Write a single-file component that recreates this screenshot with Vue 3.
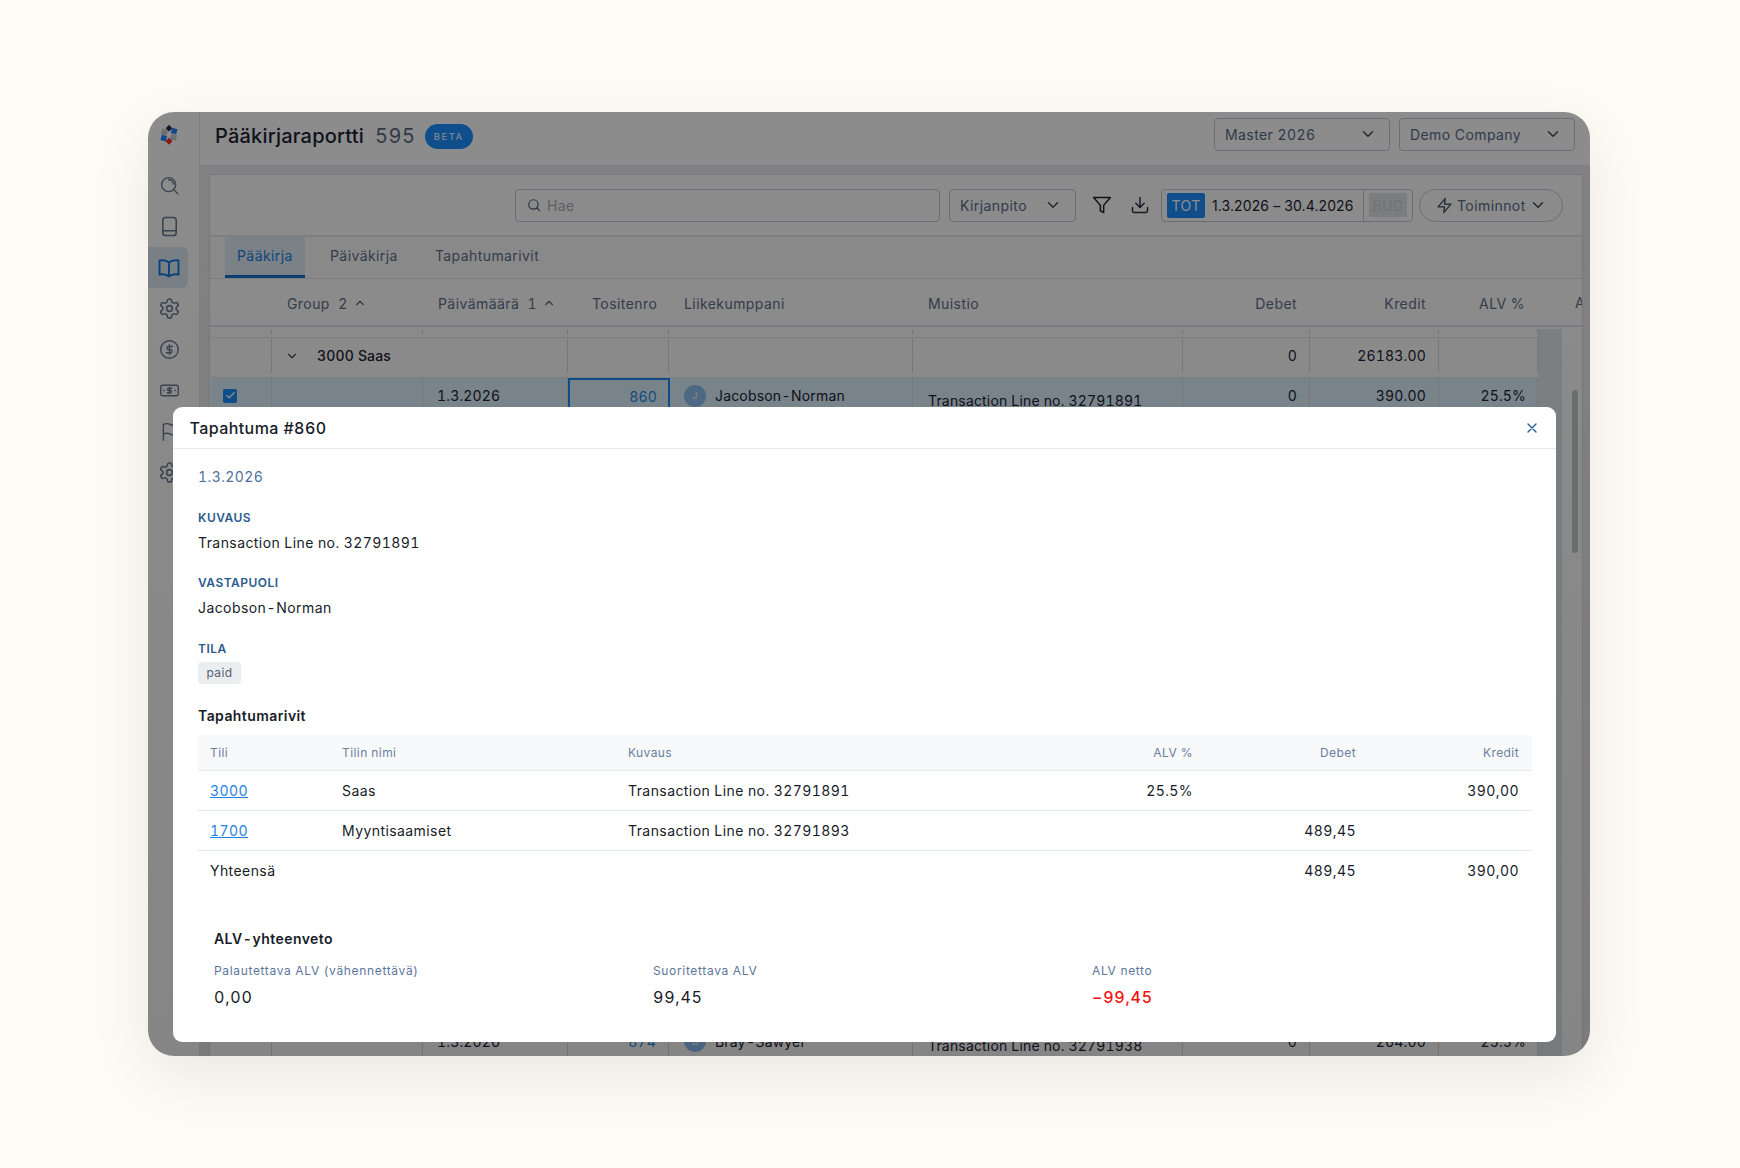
<script setup>
const icons = {
  search: 'M19 11a8 8 0 1 1-16 0a8 8 0 1 1 16 0M21.5 21.5l-4.8-4.8M11 5.5a5.5 5.5 0 0 1 5.5 5',
  book: 'M8 2.5h8a3 3 0 0 1 3 3v13a3 3 0 0 1-3 3H8a3 3 0 0 1-3-3v-13a3 3 0 0 1 3-3zM5 16.5h14',
  open: 'M12 6.5C10 4.5 6 4 2.5 4.5v14c3.5-.5 7.5 0 9.5 2 2-2 6-2.5 9.5-2v-14C18 4 14 4.5 12 6.5zM12 6.5v14',
  cog: 'M12.22 2h-.44a2 2 0 0 0-2 2v.18a2 2 0 0 1-1 1.73l-.43.25a2 2 0 0 1-2 0l-.15-.08a2 2 0 0 0-2.73.73l-.22.38a2 2 0 0 0 .73 2.73l.15.1a2 2 0 0 1 1 1.72v.51a2 2 0 0 1-1 1.74l-.15.09a2 2 0 0 0-.73 2.73l.22.38a2 2 0 0 0 2.73.73l.15-.08a2 2 0 0 1 2 0l.43.25a2 2 0 0 1 1 1.73V20a2 2 0 0 0 2 2h.44a2 2 0 0 0 2-2v-.18a2 2 0 0 1 1-1.73l.43-.25a2 2 0 0 1 2 0l.15.08a2 2 0 0 0 2.73-.73l.22-.39a2 2 0 0 0-.73-2.73l-.15-.08a2 2 0 0 1-1-1.74v-.5a2 2 0 0 1 1-1.74l.15-.09a2 2 0 0 0 .73-2.73l-.22-.38a2 2 0 0 0-2.73-.73l-.15.08a2 2 0 0 1-2 0l-.43-.25a2 2 0 0 1-1-1.73V4a2 2 0 0 0-2-2zM15 12a3 3 0 1 1-6 0a3 3 0 1 1 6 0',
  dollar: 'M22 12a10 10 0 1 1-20 0a10 10 0 1 1 20 0M15.5 8.5h-5a1.9 1.9 0 0 0 0 3.6h3a1.9 1.9 0 0 1 0 3.6h-5M12 6.5v11',
  money: 'M4 6h16a2 2 0 0 1 2 2v8a2 2 0 0 1-2 2H4a2 2 0 0 1-2-2V8a2 2 0 0 1 2-2zM14.5 9.5H11a1.2 1.2 0 0 0 0 2.5h2a1.2 1.2 0 0 1 0 2.5H9.5M12 8.5v7M5.5 12h.5M18 12h.5',
  flag: 'M5 22V4c3-1.5 6-1 8 0s5 1.5 7 0v11c-2 1.5-5 1-7 0s-5-1.5-8 0',
  filter: 'M22 3H2l8 9.46V19l4 2v-8.54L22 3z',
  download: 'M21 15v4a2 2 0 0 1-2 2H5a2 2 0 0 1-2-2v-4M7 10l5 5 5-5M12 15V3',
  zap: 'M13 2 3 14h9l-1 8 10-12h-9l1-8z',
  chevron: 'm6 9 6 6 6-6',
  up: 'm6 15 6-6 6 6',
  close: 'M18 6 6 18M6 6l12 12',
  check: 'M20 6 9 17l-5-5'
}
const sideItems = [
  { icon: 'search' }, { icon: 'book' }, { icon: 'open', active: true },
  { icon: 'cog' }, { icon: 'dollar' }, { icon: 'money' }, { icon: 'flag' }, { icon: 'cog' }
]
const tabs = ['Pääkirja', 'Päiväkirja', 'Tapahtumarivit']
const hiddenRows = Array.from({ length: 15 }, (_, i) => i)
const lines = [
  { tili: '3000', nimi: 'Saas', kuvaus: 'Transaction Line no. 32791891', alv: '25.5%', debet: '', kredit: '390,00' },
  { tili: '1700', nimi: 'Myyntisaamiset', kuvaus: 'Transaction Line no. 32791893', alv: '', debet: '489,45', kredit: '' }
]
const summary = [
  { label: 'Palautettava ALV (vähennettävä)', value: '0,00' },
  { label: 'Suoritettava ALV', value: '99,45' },
  { label: 'ALV netto', value: '−99,45', neg: true }
]
</script>

<template>
  <div class="page">
    <div class="window">
      <aside class="side">
        <svg class="logo" viewBox="0 0 24 24">
          <rect x="3" y="5" width="7" height="7" fill="#c9cbd0" transform="rotate(15 6.5 8.5)" />
          <rect x="14" y="11" width="7" height="7" fill="#c9cbd0" transform="rotate(15 17.5 14.5)" />
          <rect x="9.2" y="1" width="5.6" height="5.6" fill="#1b2a44" transform="rotate(45 12 3.8)" />
          <rect x="15" y="4" width="6.5" height="6.5" fill="#2080ff" transform="rotate(15 18.2 7.2)" />
          <rect x="2.5" y="12.5" width="6.5" height="6.5" fill="#2080ff" transform="rotate(15 5.7 15.7)" />
          <rect x="9" y="16.5" width="6" height="6" fill="#ff2a2a" transform="rotate(45 12 19.5)" />
        </svg>
        <div v-for="(item, i) in sideItems" :key="i" class="side-item" :class="{ active: item.active }">
          <svg class="ico side-ico" :class="'i-' + item.icon" viewBox="0 0 24 24"><path :d="icons[item.icon]" /></svg>
        </div>
      </aside>

      <div class="main">
        <header class="top">
          <h1 class="title">Pääkirjaraportti</h1>
          <span class="count">595</span>
          <span class="beta">BETA</span>
          <div class="select top-select first">
            <span>Master 2026</span>
            <svg class="ico chev" viewBox="0 0 24 24"><path :d="icons.chevron" /></svg>
          </div>
          <div class="select top-select">
            <span>Demo Company</span>
            <svg class="ico chev" viewBox="0 0 24 24"><path :d="icons.chevron" /></svg>
          </div>
        </header>

        <div class="band">
          <section class="card">
            <div class="toolbar">
              <div class="searchbox">
                <svg class="ico s14" viewBox="0 0 24 24"><path :d="icons.search.split('M11 5.5')[0]" /></svg>
                <span class="ph">Hae</span>
              </div>
              <div class="select kirj">
                <span>Kirjanpito</span>
                <svg class="ico chev" viewBox="0 0 24 24"><path :d="icons.chevron" /></svg>
              </div>
              <svg class="ico tool-ico first-tool" viewBox="0 0 24 24"><path :d="icons.filter" /></svg>
              <svg class="ico tool-ico second-tool" viewBox="0 0 24 24"><path :d="icons.download" /></svg>
              <div class="dates">
                <span class="tot">TOT</span>
                <span class="range">1.3.2026 – 30.4.2026</span>
                <span class="bud-wrap"><span class="bud">BUD</span></span>
              </div>
              <div class="pill">
                <svg class="ico zap" viewBox="0 0 24 24"><path :d="icons.zap" /></svg>
                <span>Toiminnot</span>
                <svg class="ico chev" viewBox="0 0 24 24"><path :d="icons.chevron" /></svg>
              </div>
            </div>

            <nav class="tabs">
              <div v-for="(t, i) in tabs" :key="t" class="tab" :class="{ on: i === 0 }">{{ t }}</div>
            </nav>

            <div class="thead">
              <div class="cols">
                <div></div>
                <div class="th">Group&nbsp; 2 <svg class="ico up" viewBox="0 0 24 24"><path :d="icons.up" /></svg></div>
                <div class="th">Päivämäärä&nbsp; 1 <svg class="ico up" viewBox="0 0 24 24"><path :d="icons.up" /></svg></div>
                <div class="th tosite">Tositenro</div>
                <div class="th">Liikekumppani</div>
                <div class="th">Muistio</div>
                <div class="th r">Debet</div>
                <div class="th r">Kredit</div>
                <div class="th r">ALV %</div>
              </div>
              <span class="th clipped">A</span>
            </div>

            <div class="scroller">
              <div class="rows">
                <div class="cols tick">
                  <div v-for="n in 9" :key="n" class="c"></div>
                </div>
                <div class="cols row group">
                  <div class="c"></div>
                  <div class="c span2">
                    <svg class="ico gchev" viewBox="0 0 24 24"><path :d="icons.chevron" /></svg>
                    <b>3000 Saas</b>
                  </div>
                  <div class="c"></div>
                  <div class="c"></div>
                  <div class="c"></div>
                  <div class="c r">0</div>
                  <div class="c r">26183.00</div>
                  <div class="c"></div>
                </div>
                <div class="cols row sel">
                  <div class="c"><span class="cb"><svg class="ico cbi" viewBox="0 0 24 24"><path :d="icons.check" /></svg></span></div>
                  <div class="c"></div>
                  <div class="c date">1.3.2026</div>
                  <div class="c r blue focus">860</div>
                  <div class="c party"><span class="av">J</span>Jacobson<span class="hy">-</span>Norman</div>
                  <div class="c memo">Transaction Line no. 32791891</div>
                  <div class="c r">0</div>
                  <div class="c r">390.00</div>
                  <div class="c r pct">25.5%</div>
                </div>
                <div v-for="n in hiddenRows" :key="n" class="cols row">
                  <div v-for="m in 9" :key="m" class="c"></div>
                </div>
                <div class="cols row">
                  <div class="c"></div>
                  <div class="c"></div>
                  <div class="c date">1.3.2026</div>
                  <div class="c r blue">874</div>
                  <div class="c party"><span class="av">B</span>Bray<span class="hy">-</span>Sawyer</div>
                  <div class="c memo">Transaction Line no. 32791938</div>
                  <div class="c r">0</div>
                  <div class="c r">264.00</div>
                  <div class="c r pct">25.5%</div>
                </div>
              </div>
              <div class="panel"></div>
              <div class="track"><div class="thumb"></div></div>
            </div>
          </section>
        </div>
      </div>

      <div class="overlay"></div>

      <div class="modal">
        <div class="m-head">
          <span class="m-title">Tapahtuma #860</span>
          <svg class="ico m-close" viewBox="0 0 24 24"><path :d="icons.close" /></svg>
        </div>
        <div class="m-body">
          <div class="m-date">1.3.2026</div>
          <div class="lab">KUVAUS</div>
          <div class="val">Transaction Line no. 32791891</div>
          <div class="lab">VASTAPUOLI</div>
          <div class="val">Jacobson<span class="hy">-</span>Norman</div>
          <div class="lab">TILA</div>
          <div class="tag">paid</div>
          <div class="sub">Tapahtumarivit</div>
          <div class="lines">
            <div class="ln lh">
              <div>Tili</div><div>Tilin nimi</div><div>Kuvaus</div>
              <div class="r">ALV %</div><div class="r">Debet</div><div class="r">Kredit</div>
            </div>
            <div v-for="l in lines" :key="l.tili" class="ln lb">
              <div><a class="link">{{ l.tili }}</a></div><div>{{ l.nimi }}</div><div>{{ l.kuvaus }}</div>
              <div class="r">{{ l.alv }}</div><div class="r">{{ l.debet }}</div><div class="r">{{ l.kredit }}</div>
            </div>
            <div class="ln lb last">
              <div>Yhteensä</div><div></div><div></div><div></div>
              <div class="r">489,45</div><div class="r">390,00</div>
            </div>
          </div>
          <div class="sum">
            <div class="sum-title">ALV<span class="hy">-</span>yhteenveto</div>
            <div class="sum-grid">
              <div v-for="s in summary" :key="s.label">
                <div class="sum-lab">{{ s.label }}</div>
                <div class="sum-val" :class="{ neg: s.neg }">{{ s.value }}</div>
              </div>
            </div>
          </div>
        </div>
      </div>
    </div>
  </div>
</template>

<style>
html, body { margin: 0; background: #fefbf4; }
</style>

<style scoped>
* { box-sizing: border-box; }
.page {
  width: 1740px; height: 1168px; padding: 112px 0 0 148px; background: #fefbf4;
  font-family: Inter, "Noto Sans", sans-serif; color: #1a2233; overflow: hidden;
  letter-spacing: .03em; font-size: 14px; font-variant-numeric: tabular-nums;
}
.hy { margin: 0 .3px; }
.window {
  position: relative; width: 1442px; height: 944px; border-radius: 26px;
  display: flex; background: #fff;
  box-shadow: 0 20px 60px rgba(0, 0, 0, .08);
}
.overlay {
  position: absolute; inset: 0; border-radius: 26px;
  background: linear-gradient(#00000073, #0000007a);
}
.ico { fill: none; stroke: currentColor; stroke-width: 2; stroke-linecap: round; stroke-linejoin: round; flex: none; display: block; }

.side {
  width: 52px; flex: none; border-right: 1px solid #e3e5ea; display: flex; flex-direction: column;
  align-items: flex-start; border-radius: 26px 0 0 26px; overflow: hidden;
}
.logo { width: 20px; height: 20px; margin: 13px 0 0 11px; }
.side-item { width: 40px; height: 41px; display: flex; align-items: center; justify-content: center; padding-left: 2px; color: #6b7a92; border-radius: 0 6px 6px 0; }
.side-item:first-of-type { margin-top: 20px; }
.side-item.active { background: #dcebf4; color: #0f79e0; }
.side-ico { width: 21px; height: 21px; stroke-width: 1.6; }
.i-book, .i-cog { width: 23px; height: 23px; }
.i-open { width: 24px; height: 24px; stroke-width: 1.9; }

.main { flex: 1; min-width: 0; display: flex; flex-direction: column; border-radius: 0 26px 26px 0; overflow: hidden; }
.top { height: 53px; flex: none; display: flex; align-items: center; padding: 0 15px 9px 15px; }
.title { margin: 4px 0 0; font-size: 20px; font-weight: 500; letter-spacing: .01em; color: #1a2233; }
.count { font-size: 20px; font-weight: 400; color: #5a6a80; margin: 4px 0 0 11px; letter-spacing: .03em; }
.beta {
  margin: 4px 0 0 9px; width: 48px; height: 25px; border-radius: 13px; background: #1c8eff; color: #fff;
  font-size: 9.5px; letter-spacing: .16em; display: flex; align-items: center; justify-content: center;
}
.select { display: flex; align-items: center; justify-content: space-between; border: 1px solid #c4c8d2; border-radius: 4px; color: #5a6a88; }
.top-select { width: 176px; height: 33px; padding: 0 12px 0 10px; margin-left: 9px; }
.top-select.first { margin-left: auto; }
.chev { width: 18px; height: 18px; color: #3d4a60; }

.band { flex: 1; min-height: 0; background: #ebecef; padding: 9px 7px 0 9px; }
.card { height: 100%; background: #fff; border: 1px solid #d9dce3; border-bottom: 0; display: flex; flex-direction: column; overflow: hidden; }

.toolbar { height: 62px; flex: none; display: flex; align-items: center; border-bottom: 2px solid #e6e8ec; padding: 0 19px 0 305px; }
.searchbox { width: 425px; height: 33px; border: 1px solid #c4c8d2; border-radius: 4px; display: flex; align-items: center; padding-left: 11px; gap: 6px; color: #4d5a70; }
.s14 { width: 14px; height: 14px; }
.ph { color: #a9aeb8; }
.kirj { width: 127px; height: 33px; margin-left: 9px; padding: 0 13px 0 10px; }
.tool-ico { width: 20px; height: 20px; color: #1a2233; stroke-width: 1.8; }
.first-tool { margin-left: 16px; }
.second-tool { margin-left: 18px; color: #2a3242; }
.dates { margin-left: 11px; width: 252px; height: 33px; border: 1px solid #c4c8d2; border-radius: 4px; display: flex; align-items: center; padding-left: 5px; }
.tot { width: 38px; height: 25px; background: #1c8eff; color: #fff; border-radius: 2px; display: flex; align-items: center; justify-content: center; }
.range { margin-left: 7px; color: #1a2233; white-space: nowrap; letter-spacing: .1px; font-variant-numeric: normal; }
.bud-wrap { margin-left: auto; width: 49px; height: 31px; border-left: 1px solid #c4c8d2; display: flex; align-items: center; justify-content: center; }
.bud { width: 38px; height: 24px; background: #e3e4e6; color: #cfd1d4; display: flex; align-items: center; justify-content: center; border-radius: 2px; }
.pill { margin-left: auto; width: 144px; height: 33px; border: 1px solid #c4c8d2; border-radius: 17px; display: flex; align-items: center; padding-left: 16px; color: #5a6a88; }
.zap { width: 17px; height: 17px; margin-right: 4px; stroke-width: 1.8; color: #3d4a60; }
.pill .chev { margin-left: 3px; }

.tabs { height: 42px; flex: none; display: flex; align-items: stretch; padding-left: 15px; border-bottom: 1px solid #e6e8ec; background: #fbfbfc; }
.tab { padding: 0 12px; display: flex; align-items: center; color: #5f6f88; margin-right: 13px; padding-bottom: 4px; }
.tab.on { background: #dfeef8; color: #1c80e0; border-bottom: 3px solid #1474cf; padding-bottom: 1px; width: 80px; }

.thead { height: 48px; flex: none; display: flex; align-items: center; position: relative; border-bottom: 2px solid #e2e4e9; padding-top: 2px; }
.cols {
  display: grid; width: 1327px; margin-left: 1px;
  grid-template-columns: 61px 151px 145px 101px 244px 270px 127px 129px 99px;
}
.th { display: flex; align-items: center; padding-left: 15px; color: #5f6f88; white-space: nowrap; gap: 2px; }
.th.tosite { padding-left: 24px; }
.th.r { justify-content: flex-end; padding: 0 13px 0 0; }
.clipped { position: absolute; left: 1365px; top: 15px; padding: 0; }
.up { width: 14px; height: 14px; margin-left: 3px; }

.scroller { flex: 1; min-height: 0; display: flex; overflow: hidden; }
.rows { width: 1328px; flex: none; }
.tick { height: 10px; }
.tick .c { border-right: 1px solid #d9dce3; margin: 2px 0 3px; }
.row { height: 40.34px; border-top: 1px solid #e7e9ed; color: #1a2233; letter-spacing: .012em; }
.row .c { display: flex; align-items: center; padding-left: 15px; border-right: 1px solid #d9dce3; margin: 0 0 4px; white-space: nowrap; min-width: 0; }
.row .c:first-child { padding-left: 12px; }
.row .date { padding-left: 14px; }
.row .r { justify-content: flex-end; padding: 0 12px 0 0; }
.row .pct { padding-right: 11px; }
.span2 { grid-column: span 2; }
.gchev { width: 14px; height: 14px; margin: 0 18px 0 -2px; color: #3d4a60; }
.group b { font-weight: 500; }
.sel { background: #dff3ff; }
.cb { width: 14px; height: 14px; background: #1c8eff; border-radius: 2px; display: flex; align-items: center; justify-content: center; color: #fff; }
.cbi { width: 11px; height: 11px; stroke-width: 3; }
.blue { color: #1f8ae8; }
.row .focus { outline: 2px solid #1c8eff; outline-offset: -2px; margin: 0 -1px 0 0; padding-bottom: 3px; }
.av { width: 22px; height: 22px; border-radius: 50%; background: #8cc0f2; color: #e4f0fb; font-size: 9px; font-weight: 600; display: flex; align-items: center; justify-content: center; margin-right: 9px; flex: none; }
.memo { padding-top: 9px; }
.panel { width: 24px; flex: none; background: #e4eaee; margin-top: 2px; }
.track { width: 21px; flex: none; }
.thumb { width: 6px; height: 163px; border-radius: 3px; background: #c8cace; margin: 63px 0 0 10px; }

.modal {
  position: absolute; left: 25px; top: 295px; width: 1383px; height: 635px; background: #fff; border-radius: 9px;
  overflow: hidden; color: #171c28;
}
.m-head { height: 42px; border-bottom: 1px solid #e6e9ee; display: flex; align-items: center; justify-content: space-between; padding: 0 16px 0 16.5px; }
.m-title { font-size: 16px; font-weight: 500; }
.m-close { width: 16px; height: 16px; color: #285a94; }
.m-body { padding: 0 24px 0 25px; }
.m-date { color: #4f6f9a; margin-top: 18px; height: 20px; line-height: 20px; }
.lab { font-size: 12px; font-weight: 600; color: #2c5a8e; margin-top: 22.5px; height: 15px; line-height: 15px; letter-spacing: .04em; }
.val { margin-top: 8px; height: 20px; line-height: 20px; }
.tag { margin-top: 6px; width: 43px; height: 22px; line-height: 21px; background: #ebeef1; color: #55606f; border-radius: 4px; font-size: 12px; text-align: center; }
.sub { font-weight: 600; margin-top: 22.5px; height: 20px; line-height: 20px; }
.lines { margin-top: 9px; width: 1334px; }
.ln { display: grid; grid-template-columns: 132px 286px 435px 154px 163px 164px; align-items: center; }
.ln > div { padding: 0 12px; white-space: nowrap; }
.ln > div:last-child { padding-right: 13px; }
.lh { height: 36px; background: #f8f9fb; border-bottom: 1px solid #e6e9ee; color: #6a7ea0; font-size: 12px; }
.lb { height: 40px; border-bottom: 1px solid #e6ebf2; }
.lb.last { border-bottom: 0; height: 39px; }
.r { text-align: right; }
.link { color: #1f84e6; text-decoration: underline; }
.sum { padding: 0 0 0 16px; margin-top: 38.5px; }
.sum-title { font-weight: 600; height: 20px; line-height: 20px; }
.sum-grid { display: grid; grid-template-columns: 439px 439px 439px; margin-top: 13px; }
.sum-lab { font-size: 12px; color: #5d769c; height: 18px; line-height: 18px; letter-spacing: .055em; }
.sum-val { font-size: 16px; margin-top: 6px; height: 22px; line-height: 22px; font-weight: 400; letter-spacing: .05em; }
.neg { color: #f01414; font-weight: 500; }
</style>
